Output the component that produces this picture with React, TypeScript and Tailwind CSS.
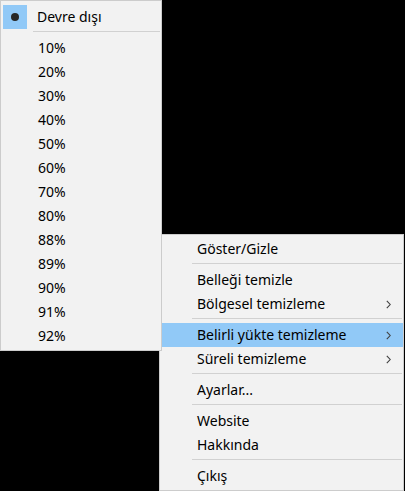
import React from "react";

const font = { fontFamily: '"Noto Sans", "Open Sans", sans-serif' };

function Chevron() {
  return (
    <svg width="5" height="9" viewBox="0 0 5 9" className="block">
      <polyline points="0.8,0.8 4.2,4.5 0.8,8.2" fill="none" stroke="#404040" strokeWidth="1.1" />
    </svg>
  );
}

function Sep() {
  return (
    <div className="h-[7px] pt-[2px]">
      <div className="h-px bg-[#d1d1d1] ml-[32px] mr-[1px]" />
    </div>
  );
}

function Item({ label, sub, active }: { label: string; sub?: boolean; active?: boolean }) {
  return (
    <div
      className={
        "h-[24px] flex items-center pl-[36px] pr-[12px] ml-[1px] text-[14px] leading-none text-black " +
        (active ? "bg-[#91c9f7]" : "")
      }
    >
      <span className="flex-1 whitespace-nowrap">{label}</span>
      {sub ? <Chevron /> : null}
    </div>
  );
}

export default function App() {
  const pcts = ["10%", "20%", "30%", "40%", "50%", "60%", "70%", "80%", "88%", "89%", "90%", "91%", "92%"];
  return (
    <div className="relative w-[405px] h-[491px] bg-black overflow-hidden" style={font}>
      {/* main menu */}
      <div className="absolute left-[159px] top-[234px] w-[245px] bg-[#f2f2f2] border border-[#cccccc] pt-[2px] pb-[2px]">
        <Item label="Göster/Gizle" />
        <Sep />
        <Item label="Belleği temizle" />
        <Item label="Bölgesel temizleme" sub />
        <Sep />
        <Item label="Belirli yükte temizleme" sub active />
        <Item label="Süreli temizleme" sub />
        <Sep />
        <Item label="Ayarlar..." />
        <Sep />
        <Item label="Website" />
        <Item label="Hakkında" />
        <Sep />
        <Item label="Çıkış" />
      </div>
      {/* submenu */}
      <div className="absolute left-0 top-0 w-[162px] bg-[#f2f2f2] border border-[#cccccc] pt-[4px] pb-[2px] z-10">
        <div className="h-[24px] flex items-center text-[14px] leading-none text-black">
          <div className="ml-[2px] w-[24px] h-[24px] bg-[#91c9f7] flex items-center justify-center">
            <div className="w-[8px] h-[8px] rounded-full bg-[#262626]" />
          </div>
          <span className="ml-[10px] whitespace-nowrap">Devre dışı</span>
        </div>
        <Sep />
        {pcts.map((p) => (
          <Item key={p} label={p} />
        ))}
      </div>
    </div>
  );
}
